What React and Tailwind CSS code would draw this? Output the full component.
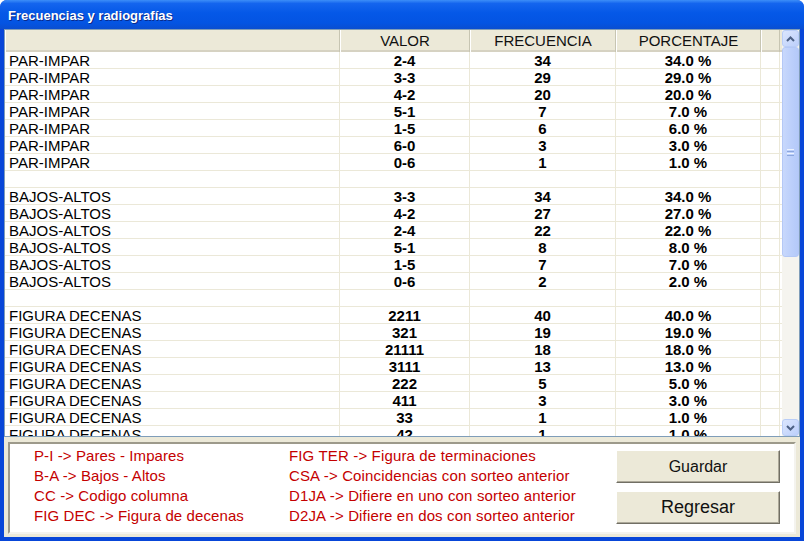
import React from 'react'

const rows = [
  ['PAR-IMPAR', '2-4', '34', '34.0 %'],
  ['PAR-IMPAR', '3-3', '29', '29.0 %'],
  ['PAR-IMPAR', '4-2', '20', '20.0 %'],
  ['PAR-IMPAR', '5-1', '7', '7.0 %'],
  ['PAR-IMPAR', '1-5', '6', '6.0 %'],
  ['PAR-IMPAR', '6-0', '3', '3.0 %'],
  ['PAR-IMPAR', '0-6', '1', '1.0 %'],
  ['', '', '', ''],
  ['BAJOS-ALTOS', '3-3', '34', '34.0 %'],
  ['BAJOS-ALTOS', '4-2', '27', '27.0 %'],
  ['BAJOS-ALTOS', '2-4', '22', '22.0 %'],
  ['BAJOS-ALTOS', '5-1', '8', '8.0 %'],
  ['BAJOS-ALTOS', '1-5', '7', '7.0 %'],
  ['BAJOS-ALTOS', '0-6', '2', '2.0 %'],
  ['', '', '', ''],
  ['FIGURA DECENAS', '2211', '40', '40.0 %'],
  ['FIGURA DECENAS', '321', '19', '19.0 %'],
  ['FIGURA DECENAS', '21111', '18', '18.0 %'],
  ['FIGURA DECENAS', '3111', '13', '13.0 %'],
  ['FIGURA DECENAS', '222', '5', '5.0 %'],
  ['FIGURA DECENAS', '411', '3', '3.0 %'],
  ['FIGURA DECENAS', '33', '1', '1.0 %'],
  ['FIGURA DECENAS', '42', '1', '1.0 %'],
]

const legendLeft = [
  'P-I -> Pares - Impares',
  'B-A -> Bajos - Altos',
  'CC -> Codigo columna',
  'FIG DEC -> Figura de decenas',
]

const legendRight = [
  'FIG TER -> Figura de terminaciones',
  'CSA -> Coincidencias con sorteo anterior',
  'D1JA -> Difiere en uno con sorteo anterior',
  'D2JA -> Difiere en dos con sorteo anterior',
]

const cols = 'grid grid-cols-[335px_130px_146px_145px_19px]'

function HeaderCell({ children }) {
  return (
    <div className="flex h-full items-center justify-center border-l border-l-white border-r border-r-[#c7c5b2] text-[15px] text-[#111]">
      {children}
    </div>
  )
}

function ScrollButton({ up }) {
  return (
    <div className="flex h-[17px] w-[17px] items-center justify-center rounded-[3px] border border-[#b9cdf7] bg-[linear-gradient(135deg,#dbe6fd,#bccffb)]">
      <svg width="9" height="6" viewBox="0 0 9 6">
        <path d={up ? 'M1 5 L4.5 1.5 L8 5' : 'M1 1 L4.5 4.5 L8 1'} fill="none" stroke="#4d6185" strokeWidth="2" />
      </svg>
    </div>
  )
}

function XpButton({ children, big }) {
  return (
    <button className={`flex h-[33px] w-[164px] items-center justify-center border border-t-white border-l-white border-r-[#716f64] border-b-[#716f64] bg-[#ece9d8] text-[#111] shadow-[inset_-1px_-1px_0_#aca899] ${big ? 'text-[18px]' : 'text-[16px]'}`}>
      {children}
    </button>
  )
}

export default function App() {
  return (
    <div className="flex h-[541px] w-[804px] flex-col overflow-hidden rounded-t-[7px] bg-[#0846d8] font-['Liberation_Sans',Arial,sans-serif]">
      {/* title bar */}
      <div className="flex h-[29px] shrink-0 items-center bg-[linear-gradient(to_bottom,#3c8ef8_0%,#1465ee_12%,#0558e7_45%,#0454e2_80%,#0a4ed0_100%)] pl-[8px] pt-[3px]">
        <span className="text-[13px] font-bold text-white [text-shadow:1px_1px_0_#0a2a8a]">Frecuencias y radiografías</span>
      </div>

      <div className="mx-[4px] mb-[4px] flex flex-1 flex-col bg-[#ece9d8]">
        {/* grid */}
        <div className="flex h-[408px] border border-[#7f9db9] bg-white">
          <div className="flex-1 overflow-hidden">
            <div className={`${cols} h-[22px] border-b-2 border-b-[#d6d2c2] bg-[#ece9d8]`}>
              <HeaderCell />
              <HeaderCell>VALOR</HeaderCell>
              <HeaderCell>FRECUENCIA</HeaderCell>
              <HeaderCell>PORCENTAJE</HeaderCell>
              <HeaderCell />
            </div>
            {rows.map((r, i) => (
              <div key={i} className={`${cols} h-[17px] border-b border-[#ebe8d8] text-[#000]`}>
                <div className="flex items-center border-r border-[#ebe8d8] pl-[4px] text-[15px] leading-none">{r[0]}</div>
                <div className="flex items-center justify-center border-r border-[#ebe8d8] text-[15px] font-bold leading-none">{r[1]}</div>
                <div className="flex items-center justify-center border-r border-[#ebe8d8] text-[15px] font-bold leading-none">{r[2]}</div>
                <div className="flex items-center justify-center border-r border-[#ebe8d8] text-[15px] font-bold leading-none">{r[3]}</div>
                <div className="border-r border-[#ebe8d8]" />
              </div>
            ))}
          </div>
          {/* scrollbar */}
          <div className="flex w-[17px] flex-col bg-[#f5f4ef]">
            <ScrollButton up />
            <div className="flex h-[210px] items-center justify-center rounded-[3px] border border-[#b4c8f6] bg-[linear-gradient(to_right,#c8d8fc,#bdd0fb_50%,#b4c9f9)]">
              <div className="flex flex-col gap-[1px]">
                <div className="h-[1px] w-[7px] bg-[#eef3fe]" />
                <div className="h-[1px] w-[7px] bg-[#8ca6dd]" />
                <div className="h-[1px] w-[7px] bg-[#eef3fe]" />
                <div className="h-[1px] w-[7px] bg-[#8ca6dd]" />
              </div>
            </div>
            <div className="flex-1" />
            <ScrollButton />
          </div>
        </div>

        {/* bottom panel */}
        <div className="mx-[4px] mt-[5px] flex h-[92px] border-2 border-t-[#9d9a8b] border-l-[#9d9a8b] border-r-[#f4f3ee] border-b-[#f4f3ee] bg-white">
          <div className="flex flex-col pl-[24px] pt-[2px] text-[15px] tracking-[0.1px] text-[#c40000]">
            {legendLeft.map((t) => (
              <div key={t} className="h-[20px] leading-[20px] whitespace-nowrap">{t}</div>
            ))}
          </div>
          <div className="ml-[45px] flex flex-col pt-[2px] text-[15px] tracking-[0.15px] text-[#c40000]">
            {legendRight.map((t) => (
              <div key={t} className="h-[20px] leading-[20px] whitespace-nowrap">{t}</div>
            ))}
          </div>
          <div className="ml-auto mr-[14px] flex flex-col gap-[8px] pt-[6px]">
            <XpButton>Guardar</XpButton>
            <XpButton big>Regresar</XpButton>
          </div>
        </div>
      </div>
    </div>
  )
}
